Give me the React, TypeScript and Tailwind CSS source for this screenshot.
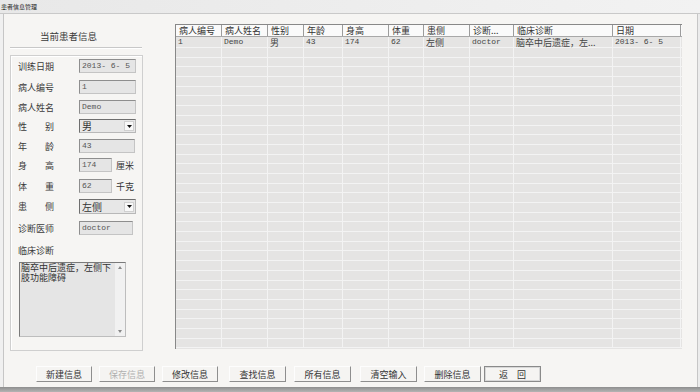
import React from "react";

const cjk = "font-['Noto_Sans_CJK_SC',sans-serif]";
const mono = "font-['Liberation_Mono','Noto_Sans_CJK_SC',monospace]";

function Label({ text }: { text: string }) {
  const chars = text.split("");
  return (
    <div className={`w-[36px] flex justify-between text-[9px] leading-none text-[#3a3a3a] ${cjk}`}>
      {chars.map((c, i) => (
        <span key={i}>{c}</span>
      ))}
    </div>
  );
}

function Input({ value, w, cn }: { value: string; w: string; cn?: boolean }) {
  return (
    <div
      className={`${w} h-full flex items-center bg-[#e5e5e5] border border-[#c4c4c4] border-t-[#8e8e8e] border-l-[#8e8e8e] pl-[2px] text-[#555] leading-none ${
        cn ? `text-[9px] ${cjk}` : `text-[8px] ${mono}`
      }`}
    >
      {value}
    </div>
  );
}

function Select({ value }: { value: string }) {
  return (
    <div className="w-[57px] h-full flex items-center bg-[#e7e7e7] border border-[#b8b8b8] border-t-[#6e6e6e] border-l-[#6e6e6e] pl-[2px] pr-[1px]">
      <span className={`flex-1 text-[10px] leading-none text-[#333] ${cjk}`}>{value}</span>
      <div className="w-[10px] h-[10px] bg-[#f8f8f8] border border-[#d0d0d0] flex items-center justify-center">
        <svg width="5" height="3" viewBox="0 0 5 3">
          <path d="M0 0h5L2.5 3z" fill="#111" />
        </svg>
      </div>
    </div>
  );
}

function Row({ mt, h, label, children }: { mt: string; h: string; label: string; children: React.ReactNode }) {
  return (
    <div className={`${mt} ${h} flex items-center pl-[7px]`}>
      <Label text={label} />
      <div className="ml-[25px] h-full flex items-center">{children}</div>
    </div>
  );
}

const cols = [
  { t: "病人编号", w: "w-[46px]" },
  { t: "病人姓名", w: "w-[46px]" },
  { t: "性别", w: "w-[36px]" },
  { t: "年龄", w: "w-[39px]" },
  { t: "身高", w: "w-[46px]" },
  { t: "体重", w: "w-[35px]" },
  { t: "患侧", w: "w-[46px]" },
  { t: "诊断...", w: "w-[44px]" },
  { t: "临床诊断", w: "w-[99px]" },
  { t: "日期", w: "w-[68px]" },
];

const row1: { v: string; cn?: boolean }[] = [
  { v: "1" },
  { v: "Demo" },
  { v: "男", cn: true },
  { v: "43" },
  { v: "174" },
  { v: "62" },
  { v: "左侧", cn: true },
  { v: "doctor" },
  { v: "脑卒中后遗症，左...", cn: true },
  { v: "2013- 6- 5" },
];

function Btn({ text, ml, w, disabled, focus }: { text: string; ml: string; w: string; disabled?: boolean; focus?: boolean }) {
  return (
    <div
      className={`${ml} ${w} h-[16px] flex items-center justify-center bg-[#f5f4f2] border ${
        focus
          ? "border-[#8a8a8a] outline outline-1 outline-[#d8d8d8] -outline-offset-2"
          : "border-[#fdfdfd] border-r-[#8e8e8e] border-b-[#8e8e8e]"
      } text-[9px] leading-none ${cjk} ${disabled ? "text-[#b0b0b0]" : "text-[#333]"}`}
    >
      {text}
    </div>
  );
}

export default function App() {
  const rows = Array.from({ length: 31 }, (_, i) => i);
  return (
    <div className="w-[700px] h-[392px] flex flex-col bg-[#f6f5f3] overflow-hidden">
      {/* Title bar */}
      <div className="h-[14px] flex items-center bg-gradient-to-r from-[#e8e8e8] to-[#f2f2f2] border-b border-[#c9c9c9] pl-[1px]">
        <span className={`text-[6px] leading-none text-[#222] ${cjk}`}>患者信息管理</span>
      </div>

      {/* Body */}
      <div className="h-[373px] flex bg-[#f0f0f0]">
        <div className="w-[3px] bg-[#f0f0f0]" />
        <div className="flex-1 flex flex-col border-l border-r border-[#c6c6c6] bg-[#f6f5f3]">
          <div className="h-[338px] flex">
            {/* Left panel */}
            <div className="ml-[6px] w-[133px] flex flex-col">
              <div className={`mt-[18px] h-[10px] pl-[30px] text-[9.5px] leading-none text-[#3a3a3a] ${cjk}`}>当前患者信息</div>
              <div className="mt-[5px] w-[132px] border-t border-[#c8c8c8] border-b border-b-white" />
              <div className="mt-[6px] h-[296px] border border-[#cfcfcf] flex flex-col shadow-[inset_1px_1px_0_#fff]">
                <Row mt="mt-[3px]" h="h-[14px]" label="训练日期">
                  <Input value="2013- 6- 5" w="w-[57px]" />
                </Row>
                <Row mt="mt-[7px]" h="h-[14px]" label="病人编号">
                  <Input value="1" w="w-[57px]" />
                </Row>
                <Row mt="mt-[6px]" h="h-[14px]" label="病人姓名">
                  <Input value="Demo" w="w-[57px]" />
                </Row>
                <Row mt="mt-[5px]" h="h-[14px]" label="性别">
                  <Select value="男" />
                </Row>
                <Row mt="mt-[6px]" h="h-[14px]" label="年龄">
                  <Input value="43" w="w-[56px]" />
                </Row>
                <Row mt="mt-[5px]" h="h-[14px]" label="身高">
                  <Input value="174" w="w-[33px]" />
                  <span className={`ml-[4px] text-[9px] leading-none text-[#333] ${cjk}`}>厘米</span>
                </Row>
                <Row mt="mt-[7px]" h="h-[14px]" label="体重">
                  <Input value="62" w="w-[33px]" />
                  <span className={`ml-[4px] text-[9px] leading-none text-[#333] ${cjk}`}>千克</span>
                </Row>
                <Row mt="mt-[6px]" h="h-[15px]" label="患侧">
                  <Select value="左侧" />
                </Row>
                <Row mt="mt-[7px]" h="h-[14px]" label="诊断医师">
                  <Input value="doctor" w="w-[54px]" />
                </Row>
                <div className={`mt-[9px] h-[12px] flex items-center pl-[7px] text-[9px] leading-none text-[#3a3a3a] ${cjk}`}>临床诊断</div>
                <div className="mt-[6px] ml-[8px] w-[107px] h-[75px] flex bg-[#e5e5e5] border border-[#bdbdbd] border-t-[#7a7a7a] border-l-[#7a7a7a]">
                  <div className={`flex-1 pl-[1px] text-[9px] leading-[10px] text-[#333] ${cjk}`}>
                    <div>脑卒中后遗症，左侧下</div>
                    <div>肢功能障碍</div>
                  </div>
                  <div className="w-[10px] h-full bg-[#f1f1f1] flex flex-col items-center justify-between py-[3px]">
                    <svg width="4" height="3" viewBox="0 0 4 3">
                      <path d="M0 3h4L2 0z" fill="#888" />
                    </svg>
                    <svg width="4" height="3" viewBox="0 0 4 3">
                      <path d="M0 0h4L2 3z" fill="#888" />
                    </svg>
                  </div>
                </div>
              </div>
            </div>

            {/* Table */}
            <div className="ml-[32px] mt-[10px] h-[325px] w-[507px] flex flex-col bg-[#e5e4e3] border-t border-l border-[#888]">
              <div className="h-[12px] flex bg-[#fafafa] border-b border-[#a8a8a8]">
                {cols.map((c, i) => (
                  <div
                    key={i}
                    className={`${c.w} h-full flex items-center pl-[3px] border-r border-[#9c9c9c] text-[9px] leading-none text-[#333] ${cjk}`}
                  >
                    {c.t}
                  </div>
                ))}
              </div>
              <div className="h-[11px] flex border-b border-[#f3f3f3]">
                {cols.map((c, i) => (
                  <div
                    key={i}
                    className={`${c.w} h-full flex items-center pl-[2px] border-r border-[#f3f3f3] leading-none text-[#444] whitespace-nowrap ${
                      row1[i].cn ? `text-[9px] ${cjk}` : `text-[8px] ${mono}`
                    }`}
                  >
                    {row1[i].v}
                  </div>
                ))}
              </div>
              {rows.map((r) => (
                <div key={r} className="h-[9.7px] flex border-b border-[#f3f3f3]">
                  {cols.map((c, i) => (
                    <div key={i} className={`${c.w} h-full border-r border-[#f3f3f3]`} />
                  ))}
                </div>
              ))}
            </div>
          </div>

          {/* Buttons */}
          <div className="mt-[14px] flex">
            <Btn text="新建信息" ml="ml-[32px]" w="w-[56px]" />
            <Btn text="保存信息" ml="ml-[7px]" w="w-[56px]" disabled />
            <Btn text="修改信息" ml="ml-[7px]" w="w-[56px]" />
            <Btn text="查找信息" ml="ml-[11px]" w="w-[57px]" />
            <Btn text="所有信息" ml="ml-[8px]" w="w-[57px]" />
            <Btn text="清空输入" ml="ml-[9px]" w="w-[57px]" />
            <Btn text="删除信息" ml="ml-[7px]" w="w-[57px]" />
            <Btn text="返　回" ml="ml-[3px]" w="w-[57px]" focus />
          </div>
        </div>
        <div className="w-[2px] bg-[#ececec]" />
      </div>

      {/* Bottom frame */}
      <div className="h-[5px] bg-gradient-to-b from-[#8e8e8e] to-[#b4b4b4]" />
    </div>
  );
}
